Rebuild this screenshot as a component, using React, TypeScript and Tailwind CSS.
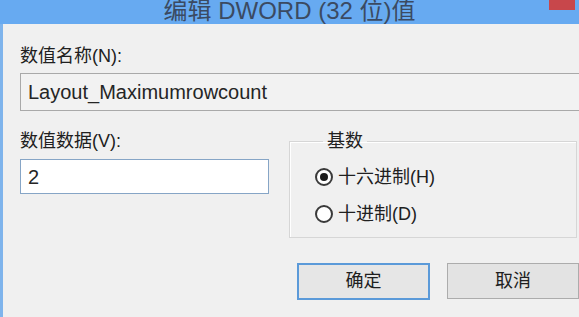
import React from "react";

const font = { fontFamily: '"Liberation Sans", "Noto Sans CJK SC", sans-serif' };

interface RadioProps {
  label: string;
  checked?: boolean;
}

const Radio: React.FC<RadioProps> = ({ label, checked }) => {
  return (
    <div className="flex items-center h-[24px]">
      <span className="w-[18px] h-[18px] rounded-full border-2 border-[#3a3a3a] bg-white flex items-center justify-center">
        {checked && <span className="w-[8px] h-[8px] rounded-full bg-[#1c1c1c]" />}
      </span>
      <span className="ml-[5px] text-[18px] leading-[24px] text-[#202020]">{label}</span>
    </div>
  );
};

export default function App() {
  return (
    <div
      className="w-[579px] h-[317px] overflow-hidden bg-[#f0f0f0] flex flex-col"
      style={font}
    >
      {/* title bar, cut off at the top of the shot */}
      <div className="relative h-[24px] shrink-0 overflow-hidden bg-[#67aaf1] flex justify-center">
        <span className="mt-[-3px] text-[24px] leading-[28px] text-[#3b4a62] whitespace-nowrap">
          编辑 DWORD (32 位)值
        </span>
        <span className="absolute right-[4px] top-0 w-[26px] h-[10px] bg-[#c8474b]" />
      </div>

      <div className="flex-1 flex flex-col border-l-[3px] border-[#7fb4ec] pl-[17px] pt-[20px]">
        <div className="text-[18px] leading-[24px] text-[#202020]">数值名称(N):</div>
        <div className="mt-[5px] h-[38px] border border-r-0 border-[#a9a9a9] bg-[#f2f2f2] flex items-center pl-[7px]">
          <span className="text-[20px] text-[#252525]">Layout_Maximumrowcount</span>
        </div>

        <div className="mt-[18px] flex items-start">
          <div className="w-[249px] flex flex-col">
            <div className="text-[18px] leading-[24px] text-[#202020]">数值数据(V):</div>
            <div className="mt-[6px] h-[35px] border border-[#86a5c6] bg-white flex items-center pl-[7px]">
              <span className="text-[20px] text-[#252525]">2</span>
            </div>
          </div>

          <fieldset className="ml-[20px] w-[288px] h-[109px] border border-[#d6d6d6] shadow-[inset_1px_1px_0_#ffffff] pl-[25px]">
            <legend className="ml-[8px] px-[4px] text-[18px] leading-[24px] text-[#202020]">基数</legend>
            <div className="mt-[12px] flex flex-col gap-[13px]">
              <Radio label="十六进制(H)" checked />
              <Radio label="十进制(D)" />
            </div>
          </fieldset>
        </div>

        <div className="mt-[25px] flex justify-end">
          <button className="w-[133px] h-[37px] border-2 border-[#5b9ad9] bg-[#e6e6e6] text-[18px] text-[#202020]">
            确定
          </button>
          <button className="ml-[17px] w-[132px] h-[36px] border border-[#acacac] bg-[#e3e3e3] text-[18px] text-[#202020]">
            取消
          </button>
        </div>
      </div>
    </div>
  );
}
